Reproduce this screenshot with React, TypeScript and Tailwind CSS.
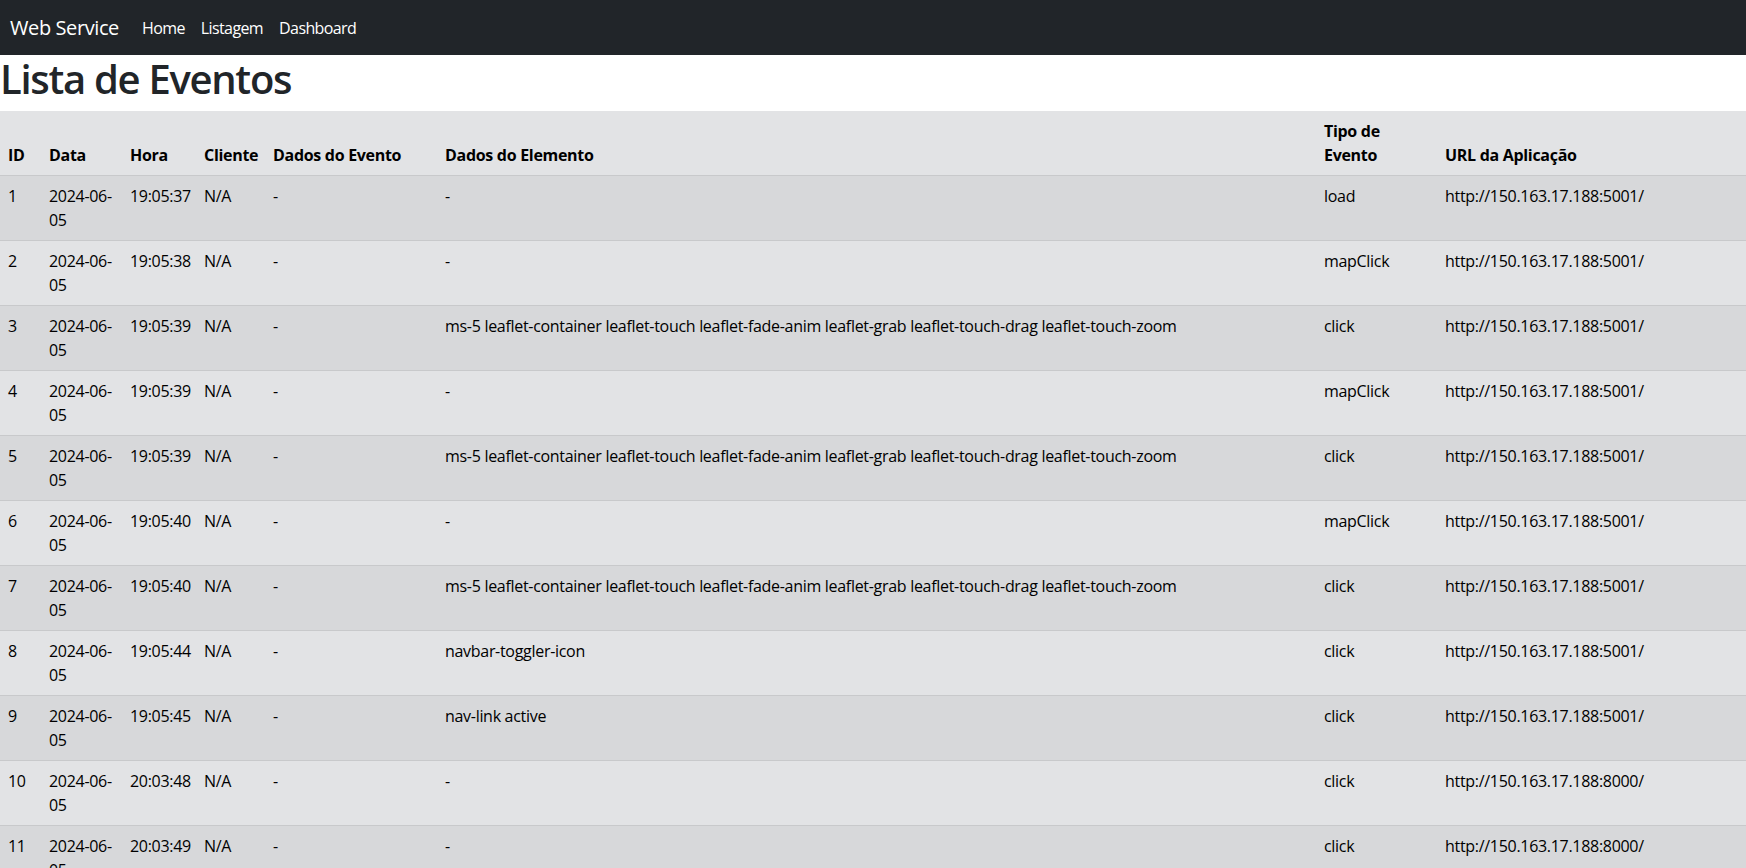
import React from "react";

type Row = {
  id: number;
  date: string;
  time: string;
  el: string;
  tipo: string;
  url: string;
};

const LEAF =
  "ms-5 leaflet-container leaflet-touch leaflet-fade-anim leaflet-grab leaflet-touch-drag leaflet-touch-zoom";
const U1 = "http://150.163.17.188:5001/";
const U2 = "http://150.163.17.188:8000/";

const rows: Row[] = [
  { id: 1, date: "05", time: "19:05:37", el: "-", tipo: "load", url: U1 },
  { id: 2, date: "05", time: "19:05:38", el: "-", tipo: "mapClick", url: U1 },
  { id: 3, date: "05", time: "19:05:39", el: LEAF, tipo: "click", url: U1 },
  { id: 4, date: "05", time: "19:05:39", el: "-", tipo: "mapClick", url: U1 },
  { id: 5, date: "05", time: "19:05:39", el: LEAF, tipo: "click", url: U1 },
  { id: 6, date: "05", time: "19:05:40", el: "-", tipo: "mapClick", url: U1 },
  { id: 7, date: "05", time: "19:05:40", el: LEAF, tipo: "click", url: U1 },
  { id: 8, date: "05", time: "19:05:44", el: "navbar-toggler-icon", tipo: "click", url: U1 },
  { id: 9, date: "05", time: "19:05:45", el: "nav-link active", tipo: "click", url: U1 },
  { id: 10, date: "05", time: "20:03:48", el: "-", tipo: "click", url: U2 },
  { id: 11, date: "05", time: "20:03:49", el: "-", tipo: "click", url: U2 },
  { id: 12, date: "05", time: "20:03:50", el: "-", tipo: "click", url: U2 },
];

export default function App() {
  return (
    <div
      className="min-h-screen bg-white text-[#212529] tracking-[-0.3px]"
      style={{ fontFamily: '"Open Sans", "Noto Sans", sans-serif' }}
    >
      <nav className="h-[55px] bg-[#212529] flex items-center px-[10px]">
        <span className="text-[20px] leading-[30px] text-white mr-[15px] tracking-[-0.4px]">
          Web Service
        </span>
        <div className="flex items-center tracking-[-0.6px]">
          <span className="px-[8px] text-[16px] leading-[24px] text-white">Home</span>
          <span className="px-[8px] text-[16px] leading-[24px] text-white">Listagem</span>
          <span className="px-[8px] text-[16px] leading-[24px] text-white">Dashboard</span>
        </div>
      </nav>
      <h1 className="text-[40px] leading-[48px] font-semibold tracking-[-1.3px] mb-[8px]">
        Lista de Eventos
      </h1>
      <table className="w-full table-fixed border-collapse text-[16px] leading-[24px] text-black">
        <colgroup>
          <col className="w-[41px]" />
          <col className="w-[81px]" />
          <col className="w-[74px]" />
          <col className="w-[69px]" />
          <col className="w-[172px]" />
          <col className="w-[879px]" />
          <col className="w-[121px]" />
          <col />
        </colgroup>
        <thead>
          <tr className="bg-[#e2e3e5] border-b border-[#c8c9cb]">
            {[
              "ID",
              "Data",
              "Hora",
              "Cliente",
              "Dados do Evento",
              "Dados do Elemento",
              null,
              "URL da Aplicação",
            ].map((h, i) => (
              <th key={i} className="p-[8px] text-left align-bottom font-bold whitespace-nowrap">
                {h === null ? (
                  <>
                    Tipo de
                    <br />
                    Evento
                  </>
                ) : (
                  h
                )}
              </th>
            ))}
          </tr>
        </thead>
        <tbody>
          {rows.map((r) => (
            <tr
              key={r.id}
              className={
                (r.id % 2 === 1 ? "bg-[#d7d8da]" : "bg-[#e2e3e5]") +
                " border-b border-[#c8c9cb]"
              }
            >
              <td className="p-[8px] align-top whitespace-nowrap">{r.id}</td>
              <td className="p-[8px] align-top whitespace-nowrap">
                2024-06-
                <br />
                {r.date}
              </td>
              <td className="p-[8px] align-top whitespace-nowrap">{r.time}</td>
              <td className="p-[8px] align-top whitespace-nowrap">N/A</td>
              <td className="p-[8px] align-top">-</td>
              <td className="p-[8px] align-top">{r.el}</td>
              <td className="p-[8px] align-top">{r.tipo}</td>
              <td className="p-[8px] align-top whitespace-nowrap">{r.url}</td>
            </tr>
          ))}
        </tbody>
      </table>
    </div>
  );
}
